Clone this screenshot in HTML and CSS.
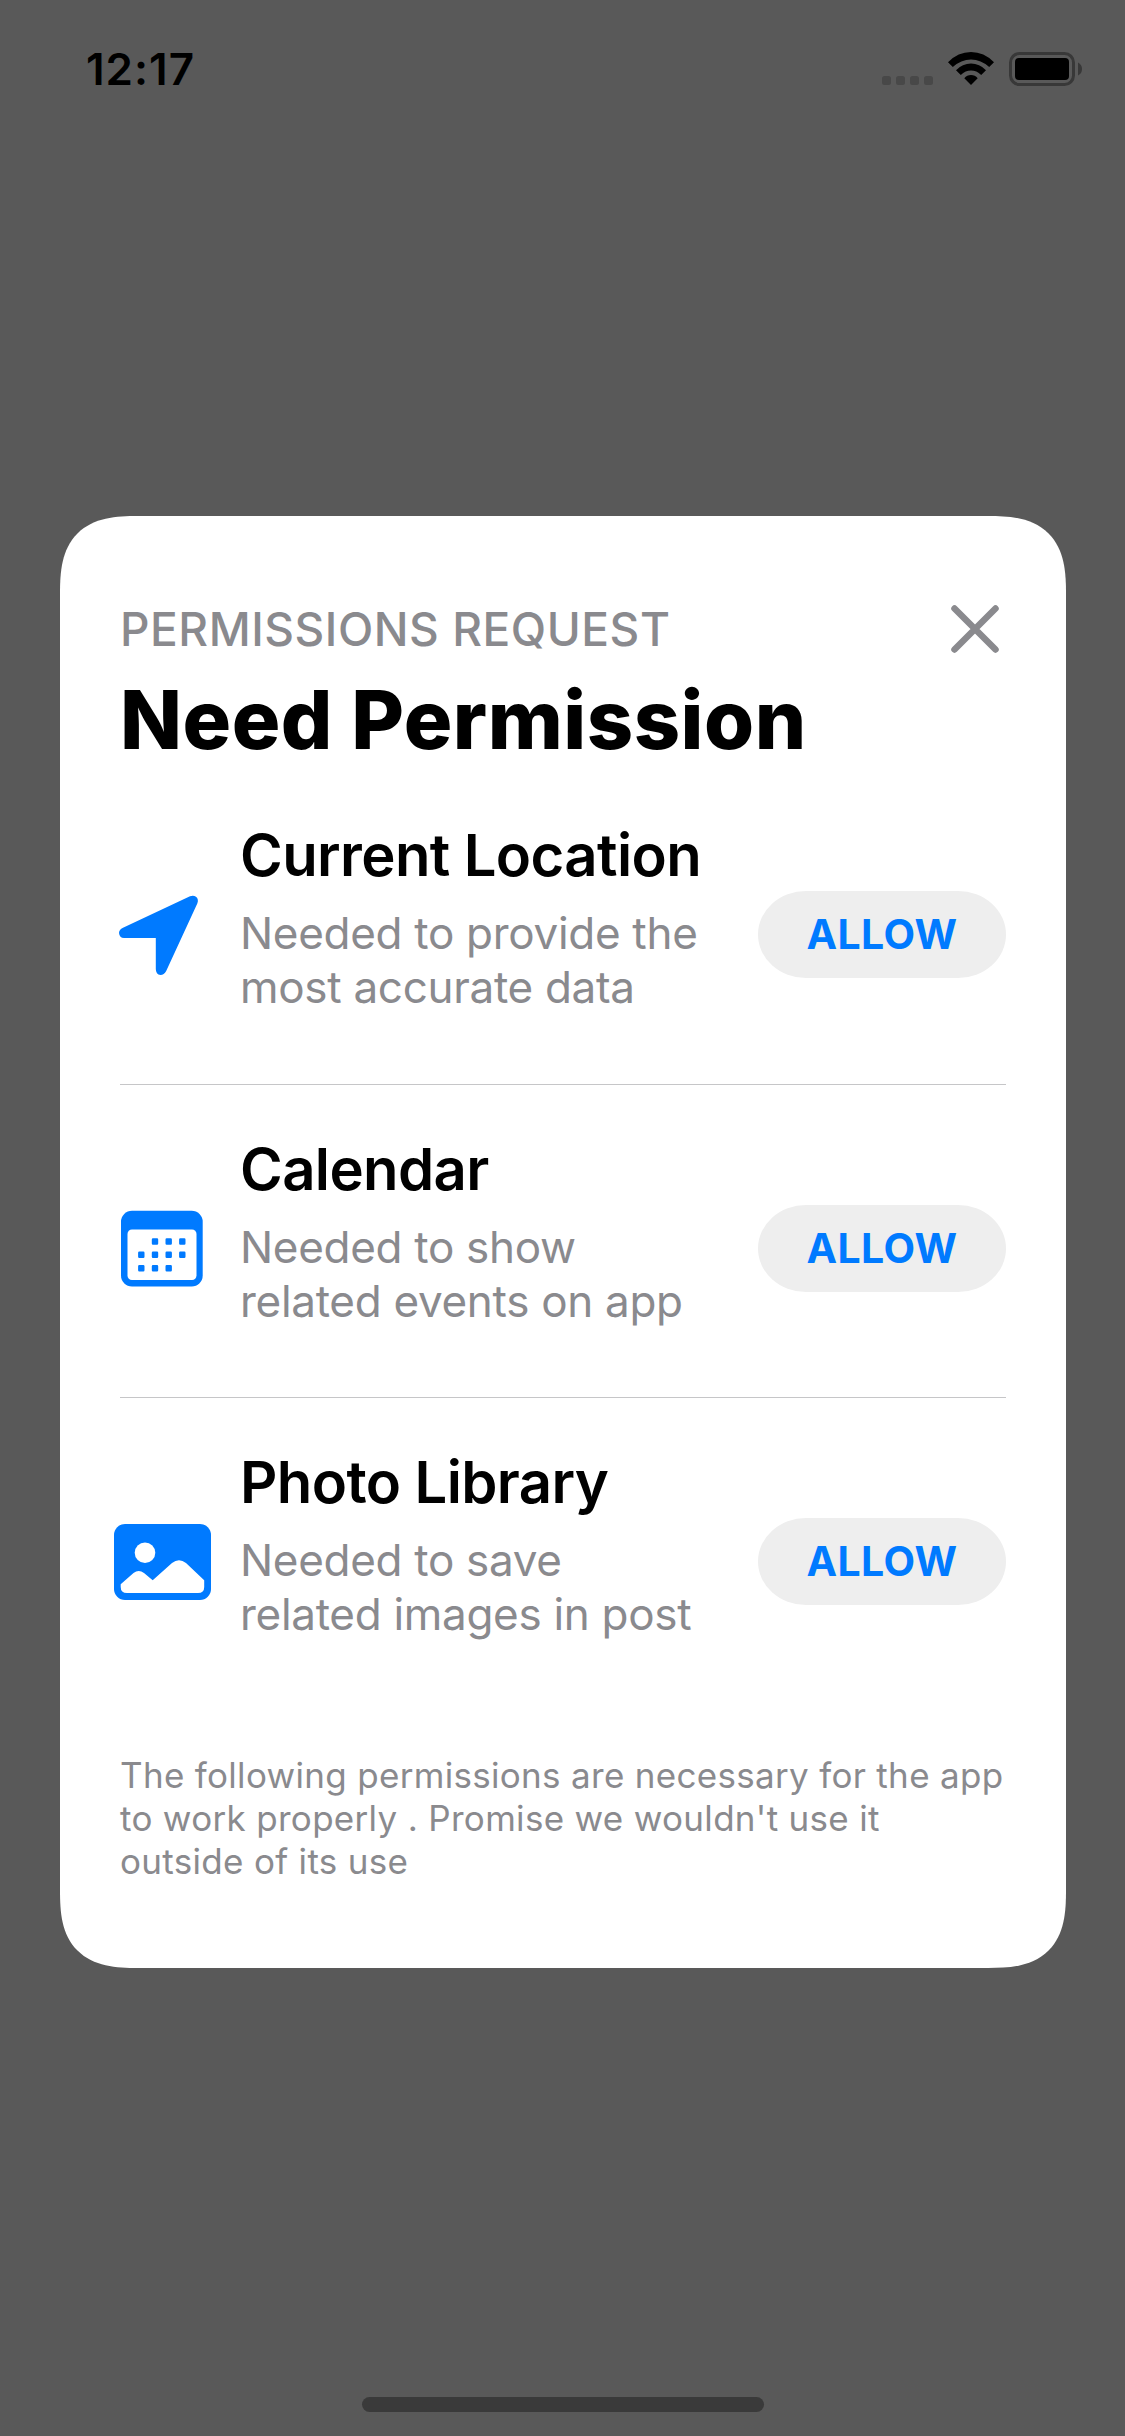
FILE: index.html
```html
<!DOCTYPE html>
<html lang="en">
<head>
<meta charset="utf-8">
<title>Need Permission</title>
<link rel="stylesheet" href="styles.css">
</head>
<body>
<div class="screen">
  <header class="status">
    <span class="time">12:17</span>
    <div class="indicators">
      <svg class="dots" width="51" height="9" viewBox="0 0 51 9"><rect width="9" height="9" rx="2.5"/><rect x="14" width="9" height="9" rx="2.5"/><rect x="28" width="9" height="9" rx="2.5"/><rect x="42" width="9" height="9" rx="2.5"/></svg>
      <svg class="wifi" width="46" height="33" viewBox="0 0 46 33"><path d="M0 10.2Q10 0 23 0T46 10.2L41.200 15Q33 7.400 23 7.400T4.800 15ZM8 18.200Q14.500 11.500 23 11.500T38 18.200L33.200 23Q28.500 18.600 23 18.600T12.800 23ZM16.300 26.300Q19 23 23 23T29.700 26.300L23 33Z"/></svg>
      <svg class="battery" width="74" height="34" viewBox="0 0 74 34"><rect class="shell" x="1.500" y="1.500" width="63" height="31" rx="9"/><rect x="6" y="6" width="54" height="22" rx="4"/><path class="cap" d="M69 10.500Q73 12.500 73 17T69 23.500Z"/></svg>
    </div>
  </header>
  <main class="card">
    <div class="top">
      <p class="eyebrow">PERMISSIONS REQUEST</p>
      <svg class="close" width="48" height="48" viewBox="0 0 48 48"><path d="M3.500 3.500L44.500 44.500M44.500 3.500L3.500 44.500"/></svg>
    </div>
    <h1>Need Permission</h1>
    <section class="row">
      <div class="icon"><svg width="100" height="100" viewBox="0 0 100 100"><path d="M84 15.300Q87.500 14 90 15.800Q93 18.300 91.300 22.500L60.200 90Q58 94 54.500 94Q49.800 93.500 49.800 88V57H18Q13.500 57 13 52Q13 48.500 17 46.700Z"/></svg></div>
      <div class="text"><h2>Current Location</h2><p>Needed to provide the<br>most accurate data</p></div>
      <button>ALLOW</button>
    </section>
    <section class="row">
      <div class="icon"><svg width="100" height="100" viewBox="0 -5.500 100 100"><rect x="15" y="10.200" width="81.700" height="75.800" rx="11"/><rect class="hole" x="21.500" y="29" width="69" height="50.500" rx="4.500"/><path class="days" d="M47 39h4v4h-4zM60.700 39h4v4h-4zM74.300 39h4v4h-4zM33.300 52.300h4v4h-4zM47 52.300h4v4h-4zM60.700 52.300h4v4h-4zM74.300 52.300h4v4h-4zM33.300 65.700h4v4h-4zM47 65.700h4v4h-4zM60.700 65.700h4v4h-4z"/></svg></div>
      <div class="text"><h2>Calendar</h2><p>Needed to show<br>related events on app</p></div>
      <button>ALLOW</button>
    </section>
    <section class="row">
      <div class="icon"><svg width="100" height="100" viewBox="0 -5 100 100"><rect x="8" y="11" width="97" height="76" rx="11"/><circle class="hole" cx="39" cy="39.700" r="10.300"/><path class="hole" d="M14.700 71.300L27.500 60Q32.700 56 38 60L46.700 67.300L66 50Q73 44.500 80 50L98.200 67.300V74Q98.200 80 92 80H21Q14.700 80 14.700 74Z"/></svg></div>
      <div class="text"><h2>Photo Library</h2><p>Needed to save<br>related images in post</p></div>
      <button>ALLOW</button>
    </section>
    <p class="note">The following permissions are necessary for the app<br>to work properly . Promise we wouldn't use it<br>outside of its use</p>
  </main>
  <footer class="home"></footer>
</div>
</body>
</html>
```
FILE: styles.css
```css
* { box-sizing: border-box; margin: 0; padding: 0; }
body { font-family: Inter, "Liberation Sans", sans-serif; background: #595959; color: #000; }
svg { display: block; flex: none; overflow: visible; }
.screen { width: 1125px; height: 2436px; display: flex; flex-direction: column; background: #595959; }
.status { height: 516px; display: flex; justify-content: space-between; align-items: flex-start; padding: 52px 42px 0 86px; }
.time { font-size: 44px; font-weight: 600; line-height: 34px; letter-spacing: 1px; white-space: nowrap; }
.indicators { display: flex; }
.dots { margin: 24px 15px 0 0; fill: #484848; }
.wifi { margin-right: 15px; }
.shell { fill: none; stroke: #383838; stroke-width: 3; }
.cap { fill: #383838; }
.card { width: 1006px; height: 1452px; margin-left: 60px; background: #fff; border-radius: 62px; padding: 88px 60px 0; white-space: nowrap; }
@supports (corner-shape: superellipse(1.45)) {
  .card { border-radius: 78px; corner-shape: superellipse(1.45); }
}
.top { height: 50px; display: flex; justify-content: space-between; align-items: center; padding-right: 7px; }
.eyebrow { font-size: 46px; font-weight: 500; line-height: 50px; letter-spacing: 0.55px; color: #8a8a8e; }
.close { fill: none; stroke: #8a8a8e; stroke-width: 6.500; stroke-linecap: round; }
h1 { font-size: 81px; font-weight: 800; line-height: 90px; letter-spacing: 0.5px; margin: 21px 0 6px; }
.row { height: 313.500px; display: flex; border-bottom: 1px solid #c6c6c8; }
.row:last-of-type { border-bottom: 0; }
.icon { width: 120px; padding-top: 110px; }
.icon svg { margin-left: -14px; fill: #007aff; }
.icon .hole { fill: #fff; }
.days { stroke: #007aff; stroke-width: 2.400; stroke-linejoin: round; }
.text { flex: 1; padding-top: 51px; }
h2 { font-size: 58px; font-weight: 600; line-height: 66px; letter-spacing: -0.6px; }
.text p { font-size: 44px; line-height: 54px; letter-spacing: -0.3px; color: #8a8a8e; margin-top: 18px; }
button { width: 248px; height: 87px; margin-top: 120px; border: 0; border-radius: 48px / 43.500px; background: #eee; color: #007aff; font: 700 41px/87px Inter, sans-serif; letter-spacing: 0.4px; }
.note { font-size: 35px; line-height: 43px; letter-spacing: 0.310px; color: #8a8a8e; margin-top: 42px; }
.home { width: 402px; height: 15px; border-radius: 8px; background: #3a3a3a; margin: 429px auto 0 362px; }
```
